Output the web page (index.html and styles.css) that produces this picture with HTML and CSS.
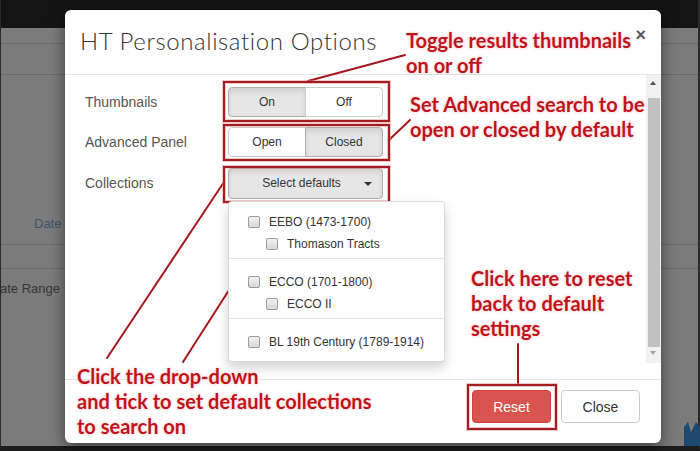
FILE: index.html
```html
<!DOCTYPE html>
<html>
<head>
<meta charset="utf-8">
<link rel="stylesheet" href="styles.css">
</head>
<body>
<div class="page">
  <div class="navbar"></div>
  <div class="subbar"></div>
  <div class="toolbar"></div>
  <div class="filters"><span class="bg-date">Date</span></div>
  <div class="gapbar"></div>
  <div class="range"><span class="bg-range">ate Range</span></div>
</div>
<svg class="bg-icon" width="16" height="24" viewBox="0 0 16 24"><polygon points="0,24 0,5 4,0 7,10 12,0 16,5 16,24" fill="#1f4a70"/></svg>

<div class="modal">
  <div class="modal-header">
    <h4 class="modal-title">HT Personalisation Options</h4>
    <span class="close">×</span>
  </div>
  <div class="modal-body">
    <div class="scroll">
      <div class="form">
        <div class="row">
          <span class="label">Thumbnails</span>
          <div class="btn-group"><span class="btn active">On</span><span class="btn">Off</span></div>
        </div>
        <div class="row">
          <span class="label">Advanced Panel</span>
          <div class="btn-group"><span class="btn">Open</span><span class="btn active">Closed</span></div>
        </div>
        <div class="row">
          <span class="label">Collections</span>
          <div class="dropdown">
            <span class="btn select active">Select defaults<span class="caret"></span></span>
            <div class="menu">
              <div class="group">
                <div class="item"><span class="cb"></span>EEBO (1473-1700)</div>
                <div class="item sub"><span class="cb"></span>Thomason Tracts</div>
              </div>
              <div class="divider"></div>
              <div class="group">
                <div class="item"><span class="cb"></span>ECCO (1701-1800)</div>
                <div class="item sub"><span class="cb"></span>ECCO II</div>
              </div>
              <div class="divider"></div>
              <div class="group">
                <div class="item"><span class="cb"></span>BL 19th Century (1789-1914)</div>
              </div>
            </div>
          </div>
        </div>
      </div>
      <div class="scrollbar">
        <span class="arrow up"></span>
        <span class="thumb"></span>
        <span class="arrow down"></span>
      </div>
    </div>
  </div>
  <div class="modal-footer">
    <span class="fbtn danger">Reset</span>
    <span class="fbtn">Close</span>
  </div>
</div>

<div class="annot">
  <svg class="lines" width="700" height="451" viewBox="0 0 700 451">
    <g stroke="#a8161d" stroke-width="2" fill="none" stroke-linecap="round">
      <line x1="308" y1="81" x2="405" y2="55"/>
      <line x1="389" y1="140" x2="410" y2="120"/>
      <line x1="224" y1="182" x2="107" y2="358"/>
      <line x1="183" y1="362" x2="238" y2="276"/>
      <line x1="518" y1="344" x2="518" y2="384"/>
    </g>
  </svg>
  <div class="box b1"></div>
  <div class="box b2"></div>
  <div class="box b3"></div>
  <div class="box b4"></div>
  <div class="box b5"></div>
  <div class="note n1">Toggle results thumbnails<br>on or off</div>
  <div class="note n2">Set Advanced search to be<br>open or closed by default</div>
  <div class="note n3">Click here to reset<br>back to default<br>settings</div>
  <div class="note n4">Click the drop-down<br>and tick to set default collections<br>to search on</div>
</div>
</body>
</html>
```

FILE: styles.css
```css
* { box-sizing: border-box; margin: 0; padding: 0; }
html, body { width: 700px; height: 451px; overflow: hidden; }
body {
  font-family: "Liberation Sans", Arial, sans-serif;
  color: #333;
  background: #7b7b7b;
  position: relative;
}

/* dimmed page behind the modal */
.page {
  height: 451px;
  display: flex;
  flex-direction: column;
  background: #7b7b7b;
  border-left: 1px solid #2a2a2a;
  border-right: 2px solid #2a2a2a;
  border-bottom: 5px solid #1c1c1c;
}
.navbar { height: 28px; flex: none; background: #141414; }
.subbar { height: 16px; flex: none; border-bottom: 1px solid #6a6a6a; }
.toolbar { height: 31px; flex: none; border-bottom: 1px solid #6a6a6a; }
.filters {
  height: 170px; flex: none;
  border-bottom: 1px solid #6a6a6a;
  display: flex; align-items: flex-end;
  padding: 0 0 13px 33px;
}
.bg-date { font-size: 13px; line-height: 15px; color: #3f546b; }
.gapbar { height: 24px; flex: none; border-bottom: 1px solid #6a6a6a; }
.range { padding-top: 10px; }
.bg-range { font-size: 13px; line-height: 15px; color: #363636; margin-left: -1px; }
.bg-icon { position: absolute; left: 684px; top: 422px; }

/* modal */
.modal {
  position: absolute;
  left: 65px; top: 10px;
  width: 596px; height: 433px;
  background: #fff;
  border-radius: 6px;
  box-shadow: 0 5px 15px rgba(0,0,0,.5);
  display: flex;
  flex-direction: column;
  overflow: hidden;
}
.modal-header {
  height: 65px; flex: none;
  border-bottom: 1px solid #e5e5e5;
  padding: 16px 15px 0;
  position: relative;
}
.modal-title {
  font-family: Lato, "Open Sans", sans-serif;
  font-weight: 300;
  font-size: 24px;
  line-height: 30px;
  letter-spacing: 0.6px;
  color: #333;
}
.close {
  position: absolute;
  right: 15px; top: 16px;
  font: bold 18px/1 "Liberation Sans", Arial, sans-serif;
  color: #5a5a5a;
}

.modal-body { height: 304px; flex: none; padding-bottom: 16px; }
.scroll { height: 288px; display: flex; }
.form { flex: 1; padding: 12px 0 0 20px; }
.row { display: flex; align-items: center; height: 30px; margin-bottom: 10px; }
.row:nth-child(2) { margin-bottom: 11px; }
.label { width: 143px; font-size: 14px; color: #555; }
.btn-group { display: flex; width: 155px; height: 30px; }
.btn {
  flex: 1;
  display: flex; align-items: center; justify-content: center;
  border: 1px solid #ccc;
  background: #fff;
  font-size: 12px;
  color: #333;
}
.btn-group .btn:first-child { border-radius: 4px 0 0 4px; }
.btn-group .btn:last-child { border-radius: 0 4px 4px 0; margin-left: -1px; }
.btn.active {
  background: #e6e6e6;
  border-color: #adadad;
  box-shadow: inset 0 3px 5px rgba(0,0,0,.1);
}
.dropdown { position: relative; width: 155px; height: 31px; }
.select {
  height: 31px; width: 155px;
  border-radius: 4px;
  padding-right: 8px;
  position: relative;
}
.caret {
  position: absolute;
  right: 10px; top: 13px;
  width: 0; height: 0;
  border-top: 4px solid #333;
  border-left: 4px solid transparent;
  border-right: 4px solid transparent;
}
.menu {
  position: absolute;
  left: 0; top: 33px;
  width: 217px;
  background: #fff;
  border: 1px solid rgba(0,0,0,.15);
  border-radius: 4px;
  box-shadow: 0 6px 12px rgba(0,0,0,.175);
  padding: 9px 0 8px;
  z-index: 2;
}
.item {
  height: 22px;
  display: flex; align-items: center;
  padding-left: 19px;
  font-size: 12px;
  color: #333;
}
.item.sub { padding-left: 37px; }
.cb {
  width: 12px; height: 12px;
  border: 1px solid #9c9c9c;
  border-radius: 2px;
  background: linear-gradient(#f2f2f2, #d6d6d6);
  margin-right: 9px;
  flex: none;
}
.divider { height: 1px; background: #e5e5e5; margin: 3px 0 12px; }

.scrollbar {
  width: 15px; flex: none;
  background: #f1f1f1;
  display: flex; flex-direction: column; align-items: center;
}
.arrow { height: 15px; width: 15px; flex: none; position: relative; }
.arrow::after {
  content: "";
  position: absolute; left: 4px;
  border-left: 3.5px solid transparent;
  border-right: 3.5px solid transparent;
}
.arrow.up::after { top: 6px; border-bottom: 4px solid #505050; }
.arrow.down::after { top: 3px; border-top: 4px solid #a3a3a3; }
.thumb { flex: 1; width: 12px; background: #c1c1c1; margin: 8px 0 1px; }

.modal-footer {
  flex: 1;
  border-top: 1px solid #e5e5e5;
  display: flex; justify-content: flex-end; align-items: flex-start;
  gap: 10px;
  padding: 10px 21px 0;
}
.fbtn {
  width: 79px; height: 33px;
  display: flex; align-items: center; justify-content: center;
  border: 1px solid #ccc;
  border-radius: 4px;
  background: #fff;
  font-size: 14px;
  color: #333;
}
.fbtn.danger { background: #d9534f; border-color: #d43f3a; color: #fff; }

/* annotation overlay */
.annot { position: absolute; left: 0; top: 0; width: 700px; height: 451px; pointer-events: none; }
.lines { position: absolute; left: 0; top: 0; }
.box {
  position: absolute;
  border: 2px solid #a11d22;
  box-shadow: 0 0 0 1px rgba(225,130,130,.45), inset 0 0 0 1px rgba(225,130,130,.45);
}
.b1 { left: 223px; top: 81px; width: 167px; height: 41px; }
.b2 { left: 223px; top: 124px; width: 167px; height: 37px; }
.b3 { left: 223px; top: 166px; width: 167px; height: 37px; }
.b4 { left: 237px; top: 212px; width: 200px; height: 146px; }
.b5 { left: 467px; top: 384px; width: 90px; height: 46px; }
.note {
  position: absolute;
  font-family: Lato, "Open Sans", sans-serif;
  font-weight: bold;
  font-size: 20px;
  line-height: 25px;
  color: #c1121a;
  white-space: nowrap;
  text-shadow: 0 0 2px #fff, 0 0 3px rgba(235,140,140,.7);
}
.n1 { left: 406px; top: 28px; }
.n2 { left: 410px; top: 92px; }
.n3 { left: 471px; top: 266px; }
.n4 { left: 77px; top: 364px; }
```
